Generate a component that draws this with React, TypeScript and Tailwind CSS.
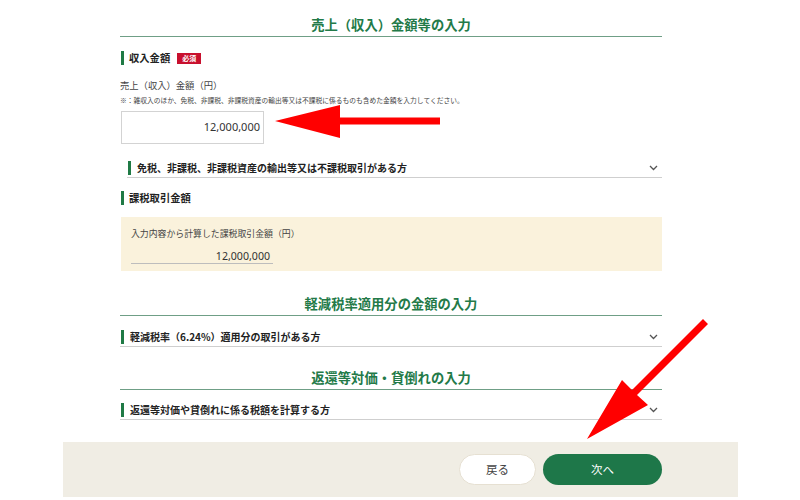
import React from "react";

const jp = { fontFamily: '"Noto Sans CJK JP", "Noto Sans", sans-serif' } as React.CSSProperties;
const num = { fontFamily: '"Noto Sans", "DejaVu Sans", sans-serif' } as React.CSSProperties;

function Chevron() {
  return (
    <svg width="9" height="6" viewBox="0 0 9 6" className="shrink-0">
      <path d="M1 1 L4.5 4.5 L8 1" fill="none" stroke="#555" strokeWidth="1.3" />
    </svg>
  );
}

function SectionTitle({ children, mt }: { children: React.ReactNode; mt: string }) {
  return (
    <div className={`${mt} h-[22px] border-b border-[#6f9f86] flex items-center justify-center`}>
      <span className="text-[13.3px] font-bold text-[#237a48] leading-[20px] -mt-[1px]">{children}</span>
    </div>
  );
}

function Label({ children, mt }: { children: React.ReactNode; mt: string }) {
  return (
    <div className={`${mt} flex items-center h-[14px]`}>
      <div className="w-[3px] h-[14px] bg-[#1f7a45] ml-[1px]" />
      <span className="ml-[5px] text-[10.3px] font-bold text-[#222] leading-[14px]">{children}</span>
    </div>
  );
}

function AccRow({ children, mt, indent }: { children: React.ReactNode; mt: string; indent?: boolean }) {
  return (
    <div className={`${mt} ${indent ? "ml-[7px]" : ""} h-[20px] border-b border-[#cfcfcf] flex items-center pr-[4px]`}>
      <div className="w-[3px] h-[14px] bg-[#1f7a45] ml-[1px]" />
      <span className="ml-[6px] text-[10px] font-bold text-[#222] leading-[14px] flex-1">{children}</span>
      <Chevron />
    </div>
  );
}

export default function App() {
  return (
    <div className="w-[800px] h-[500px] bg-white relative overflow-hidden" style={jp}>
      <div className="w-[675px] ml-[63px]">
        <div className="pl-[57px] pr-[76px]">
          <SectionTitle mt="mt-[15px]">売上（収入）金額等の入力</SectionTitle>

          <div className="mt-[14px] flex items-center h-[14px]">
            <div className="w-[3px] h-[14px] bg-[#1f7a45] ml-[1px]" />
            <span className="ml-[5px] text-[10.3px] font-bold text-[#222] leading-[14px]">収入金額</span>
            <span className="ml-[7px] bg-[#c8102e] text-white text-[7px] font-bold leading-[11px] px-[5px] h-[11px]">必須</span>
          </div>

          <div className="mt-[13px] text-[9.3px] text-[#444] leading-[14px]">売上（収入）金額（円）</div>
          <div className="mt-[3px] text-[6.75px] text-[#444] leading-[10px] whitespace-nowrap">
            ※：雑収入のほか、免税、非課税、非課税資産の輸出等又は不課税に係るものも含めた金額を入力してください。
          </div>

          <div className="mt-[6px] ml-[1px] w-[143px] h-[33px] border border-[#d3d3d3] flex items-center justify-end pr-[3px]">
            <span className="text-[11px] text-[#333]" style={num}>12,000,000</span>
          </div>

          <AccRow mt="mt-[14px]" indent>免税、非課税、非課税資産の輸出等又は不課税取引がある方</AccRow>

          <Label mt="mt-[13px]">課税取引金額</Label>

          <div className="mt-[12px] ml-[1px] h-[54px] bg-[#faf2dc] pl-[10px] pt-[11px]">
            <div className="text-[8.9px] text-[#444] leading-[12px]">入力内容から計算した課税取引金額（円）</div>
            <div className="mt-[9px] w-[142px] border-b border-[#bdbdbd] text-right pr-[3px] text-[10.6px] leading-[14px] text-[#333]" style={num}>
              12,000,000
            </div>
          </div>

          <SectionTitle mt="mt-[23px]">軽減税率適用分の金額の入力</SectionTitle>
          <AccRow mt="mt-[11px]">軽減税率（6.24%）適用分の取引がある方</AccRow>

          <SectionTitle mt="mt-[21px]">返還等対価・貸倒れの入力</SectionTitle>
          <AccRow mt="mt-[10px]">返還等対価や貸倒れに係る税額を計算する方</AccRow>
        </div>

        <div className="mt-[22px] h-[55px] bg-[#f0ede4] flex items-start justify-end pr-[76px] pt-[12px] gap-[7px]">
          <button className="w-[77px] h-[31px] rounded-full bg-white border border-[#e6e0d2] text-[11.5px] text-[#444]">戻る</button>
          <button className="w-[119px] h-[31px] rounded-full bg-[#1e7749] text-[11.5px] text-white">次へ</button>
        </div>
      </div>

      <svg className="absolute left-0 top-0 pointer-events-none" width="800" height="500">
        <polygon points="275,121 340,105 340,117.5 440,117.5 440,124.5 340,124.5 340,138" fill="#ff0000" />
        <polygon points="587,439 622,380 632,390 703,319 708,324 637,395 648,405" fill="#ff0000" />
      </svg>
    </div>
  );
}
